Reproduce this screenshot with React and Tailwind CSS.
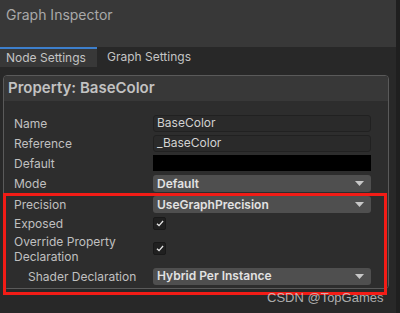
import { useState } from 'react'

const FONT = { fontFamily: 'Inter, "Noto Sans", sans-serif' }

function TextField({ value }) {
  return (
    <div className="w-[218px] h-[17px] bg-[#2a2a2a] border border-[#212121] rounded-[3px] flex items-center px-[3px] text-[12px] text-[#d2d2d2]">
      {value}
    </div>
  )
}

function Dropdown({ value }) {
  return (
    <div className="w-[218px] h-[17px] bg-[#4f4f4f] rounded-[3px] flex items-center justify-between pl-[4px] pr-[7px] text-[12px] font-semibold text-[#e2e2e2]">
      <span>{value}</span>
      <svg width="9" height="5" viewBox="0 0 9 5">
        <path d="M0 0 L9 0 L4.5 5 Z" fill="#c8c8c8" />
      </svg>
    </div>
  )
}

function Checkbox({ checked }) {
  return (
    <div className="w-[13px] h-[13px] bg-[#202020] border border-[#191919] rounded-[2px] flex items-center justify-center">
      {checked && (
        <svg width="8" height="7" viewBox="0 0 9 8">
          <path d="M1 4.2 L3.4 6.4 L8 1.2" stroke="#e6e6e6" strokeWidth="1.5" fill="none" />
        </svg>
      )}
    </div>
  )
}

function Row({ label, h, indent, children }) {
  return (
    <div className="flex items-center" style={{ height: h }}>
      <div className={`w-[139px] shrink-0 text-[12px] leading-[15px] text-[#c0c0c0] ${indent ? 'pl-[14px]' : ''}`}>
        {label}
      </div>
      {children}
    </div>
  )
}

export default function App() {
  const [tab] = useState('node')

  return (
    <div className="w-[400px] h-[313px] bg-[#282828] overflow-hidden relative flex" style={FONT}>
      <div className="w-[396px] flex flex-col">
        {/* title */}
        <div className="h-[47px] bg-[#383838] px-[6px] pt-[4px] text-[14px] text-[#a9a9a9]">
          Graph Inspector
        </div>

        {/* tabs */}
        <div className="h-[20px] flex text-[12px] text-[#c4c4c4]">
          <div className={`w-[97px] border-t-2 border-[#3d7fcc] pl-[6px] flex items-center ${tab === 'node' ? 'bg-[#383838]' : ''}`}>
            Node Settings
          </div>
          <div className="pl-[10px] flex items-center">Graph Settings</div>
        </div>

        {/* property panel */}
        <div className="mt-[8px] ml-[3px] w-[386px] border border-[#5a5a5a] rounded-[4px] overflow-hidden">
          <div className="h-[25px] bg-[#383838] pl-[4px] flex items-center text-[15px] font-semibold text-[#c2c2c2]">
            Property: BaseColor
          </div>
          <div className="bg-[#2d2d2d] pl-[10px] pt-[12px] pb-[1px]">
            <Row label="Name" h={20}><TextField value="BaseColor" /></Row>
            <Row label="Reference" h={20}><TextField value="_BaseColor" /></Row>
            <Row label="Default" h={20}>
              <div className="w-[218px] h-[16px] bg-black" />
            </Row>
            <Row label="Mode" h={21}><Dropdown value="Default" /></Row>
            <Row label="Precision" h={21}><Dropdown value="UseGraphPrecision" /></Row>
            <Row label="Exposed" h={17}><Checkbox checked /></Row>
            <Row label={<>Override Property<br />Declaration</>} h={33}><Checkbox checked /></Row>
            <Row label="Shader Declaration" h={22} indent><Dropdown value="Hybrid Per Instance" /></Row>
          </div>
        </div>
      </div>
      <div className="w-[4px] bg-[#1f1f1f]" />

      {/* red annotation box */}
      <div className="absolute left-[3px] top-[193px] w-[384px] h-[102px] border-[3px] border-[#f21c16]" />

      {/* watermark */}
      <div
        className="absolute left-[267px] top-[288px] text-[13px] text-[#d0d0d0]/80"
        style={{ fontFamily: '"Liberation Sans", Arial, sans-serif' }}
      >
        CSDN @TopGames
      </div>
    </div>
  )
}
